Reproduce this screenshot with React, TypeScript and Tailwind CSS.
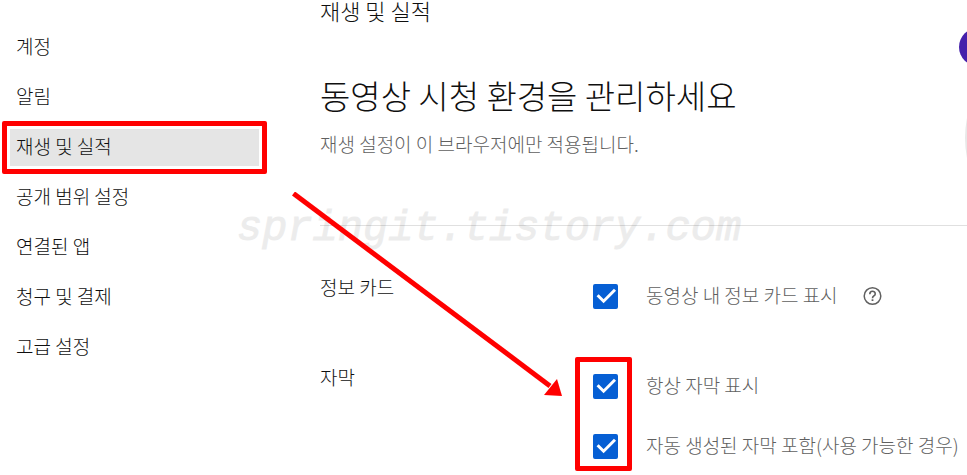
import { useState } from "react";

const menu = [
  "계정",
  "알림",
  "재생 및 실적",
  "공개 범위 설정",
  "연결된 앱",
  "청구 및 결제",
  "고급 설정",
];

type OptionProps = {
  label: string;
  help?: boolean;
};

function Option({ label, help }: OptionProps) {
  const [checked, setChecked] = useState(true);

  return (
    <div className="flex items-center">
      <label className="flex items-center gap-7 whitespace-nowrap text-[#606060]">
        <span className="grid h-[25px] w-[25px] shrink-0">
          <input
            type="checkbox"
            checked={checked}
            onChange={(e) => setChecked(e.target.checked)}
            className="peer col-start-1 row-start-1 h-[25px] w-[25px] appearance-none rounded-xs border-2 border-[#606060] checked:border-[#065fd4] checked:bg-[#065fd4]"
          />
          <svg
            viewBox="0 0 25 25"
            className="pointer-events-none invisible col-start-1 row-start-1 h-[25px] w-[25px] peer-checked:visible"
            fill="none"
            stroke="#fff"
            strokeWidth="3"
          >
            <path d="M4.6 11.2 L10.6 17.2 L22 5.8" />
          </svg>
        </span>
        <span className="pb-[2px]">{label}</span>
      </label>
      {help && (
        <button type="button" aria-label="도움말" className="ml-6 text-[#606060]">
          <svg viewBox="0 0 22 22" className="h-[22px] w-[22px]" fill="none" stroke="currentColor">
            <circle cx="10.5" cy="11" r="8.3" strokeWidth="1.5" />
            <path
              d="M7.800 9.200 C7.800 5.400 13.200 5.400 13.200 8.900 C13.200 11 10.500 11 10.500 13.200"
              strokeWidth="1.6"
            />
            <path d="M10.500 14.300 V16" strokeWidth="1.8" />
          </svg>
        </button>
      )}
    </div>
  );
}

function Sidebar() {
  return (
    <nav className="w-[259px] shrink-0 pt-[29px] pl-[10px]">
      <ul className="space-y-[13px]">
        {menu.map((item) => {
          const active = item === "재생 및 실적";
          return (
            <li key={item} className="relative">
              <a
                href="#"
                aria-current={active ? "page" : undefined}
                className={
                  active
                    ? "block h-[37px] bg-[#e5e5e5] pl-[6px] leading-[34px]"
                    : "block h-[37px] pl-[6px] leading-[34px]"
                }
              >
                {item}
              </a>
              {active && (
                <div className="pointer-events-none absolute -inset-2 rounded-xs border-[5px] border-[#ff0000]" />
              )}
            </li>
          );
        })}
      </ul>
    </nav>
  );
}

export default function App() {
  return (
    <div className="relative flex overflow-hidden bg-white font-['Noto_Sans_CJK_KR',sans-serif] text-[19px] leading-[28px] font-light text-[#0f0f0f]">
      <Sidebar />

      <main className="min-w-0 flex-1 pb-[12px] pl-[61px]">
        <h2 className="text-[22px] leading-[20px]">재생 및 실적</h2>
        <h1 className="mt-[51px] text-[33px] leading-[48px]">동영상 시청 환경을 관리하세요</h1>
        <p className="mt-[11px] text-[#606060]">재생 설정이 이 브라우저에만 적용됩니다.</p>

        <hr className="mt-[67px] border-[#e0e0e0]" />

        <section className="mt-[47px] flex">
          <h3 className="w-[273px] shrink-0">정보 카드</h3>
          <div className="pt-[8px]">
            <Option label="동영상 내 정보 카드 표시" help />
          </div>
        </section>

        <section className="mt-[52px] flex">
          <h3 className="w-[273px] shrink-0">자막</h3>
          <div className="relative space-y-[30px] pt-[8px]">
            <Option label="항상 자막 표시" />
            <Option label="자동 생성된 자막 포함(사용 가능한 경우)" />
            <div className="pointer-events-none absolute -top-[6px] -left-[18px] h-[114px] w-[57px] rounded-xs border-[5px] border-[#ff0000]" />
          </div>
        </section>
      </main>

      {/* channel art cut off at the right edge */}
      <div className="absolute top-[28px] -right-[30px] h-[38px] w-[38px] rounded-full bg-[#4520ab]" />
      <div className="absolute top-[37px] -right-[200px] h-[202px] w-[202px] rounded-full bg-[#e8e8e8]" />

      <div className="pointer-events-none absolute top-[204px] left-[237px] font-['Liberation_Mono',monospace] text-[42px] leading-[50px] font-normal text-black italic opacity-7 [-webkit-text-stroke:1px_black]">
        springit.tistory.com
      </div>

      <svg
        viewBox="0 0 270 205"
        className="pointer-events-none absolute top-[192px] left-[292px] h-[205px] w-[270px]"
        fill="#ff0000"
      >
        <path d="M1.500 1.500 L258 194" stroke="#ff0000" strokeWidth="5" />
        <path d="M270 204 L265 187 L252 203 Z" />
      </svg>
    </div>
  );
}
